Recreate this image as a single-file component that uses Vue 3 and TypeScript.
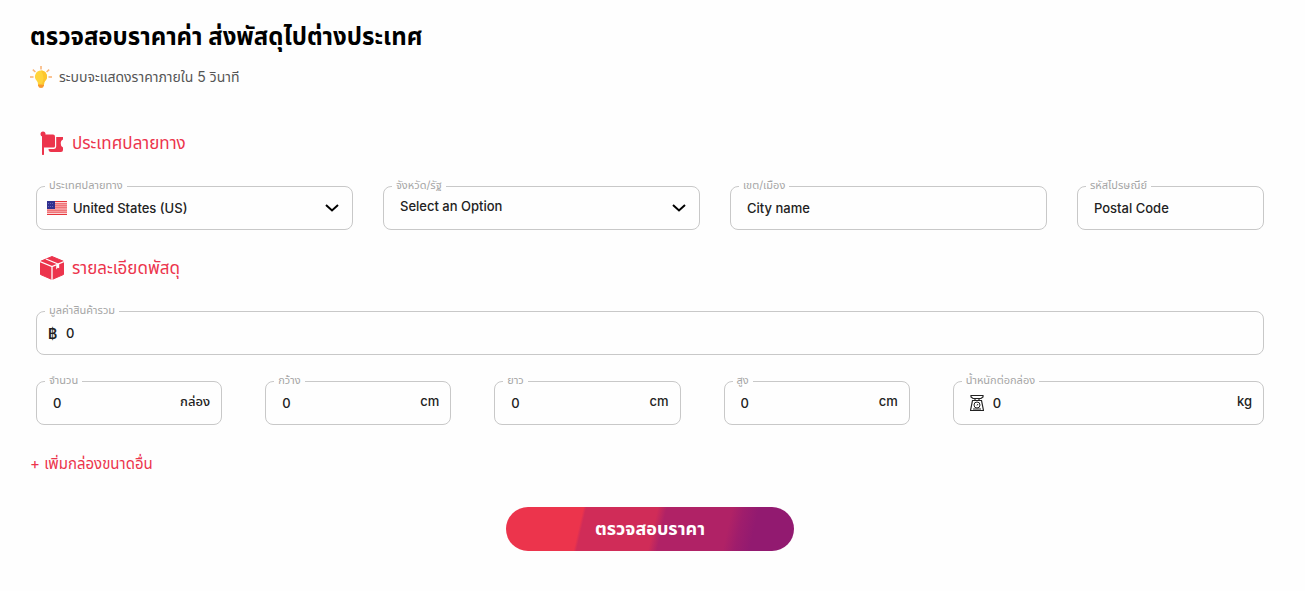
<script setup lang="ts">
import { ref } from 'vue'

interface SizeField {
  id: string
  label: string
  unit: string
}

const sizeFields: SizeField[] = [
  { id: 'quantity', label: 'จำนวน', unit: 'กล่อง' },
  { id: 'width', label: 'กว้าง', unit: 'cm' },
  { id: 'length', label: 'ยาว', unit: 'cm' },
  { id: 'height', label: 'สูง', unit: 'cm' },
]

const country = ref('US')
const province = ref('')
const city = ref('')
const postal = ref('')
const total = ref('0')
const weight = ref('0')
const sizes = ref<Record<string, string>>({ quantity: '0', width: '0', length: '0', height: '0' })
const rays = [0, 48, 90, 270, 312]
</script>

<template>
  <form class="quote" @submit.prevent>
    <h1>ตรวจสอบราคาค่า ส่งพัสดุไปต่างประเทศ</h1>
    <p class="hint">
      <svg width="22" height="22" viewBox="0 0 22 22" aria-hidden="true">
        <path
          v-for="angle in rays"
          :key="angle"
          d="M11 0v3.500"
          stroke="#f9b578"
          stroke-width="1.6"
          :transform="`rotate(${angle} 11 11)`"
        />
        <path d="M8 16h6v3.500q-.5 2.500-3 2.500t-3-2.500z" fill="#f79a2e" />
        <path d="M11 4.500a6 6 0 0 1 4.300 10.200Q14 16 14 18.500H8q0-2.500-1.300-3.800A6 6 0 0 1 11 4.500z" fill="#ffd43c" />
        <path d="M11 4.500a6 6 0 0 1 4.300 10.200Q14 16 14 18.500h-2.500q4-7-.5-14z" fill="#fdc62f" />
      </svg>
      <span>ระบบจะแสดงราคาภายใน 5 วินาที</span>
    </p>

    <section class="destination">
      <h2>
        <svg width="24" height="26" viewBox="0 0 24 26" fill="#ec344c" aria-hidden="true">
          <circle cx="3" cy="4" r="2.500" />
          <path d="M2 4h2v20.500q-1 1-2 0z" />
          <path d="M3.500 4.500H13q2 0 2 2v9.500q0 1.500-1.500 1.500h-10z" />
          <path d="M16.200 7H23v2.500q-2.600 1-2.200 4.500-.2 2 2.200 3.500V20q0 2-2 2H11q-2.500 0-2.500-3H14q2.200-.2 2.200-2.500z" />
        </svg>
        ประเทศปลายทาง
      </h2>
      <div class="row place-row">
        <div class="field">
          <label for="country">ประเทศปลายทาง</label>
          <svg class="flag" width="20" height="14" viewBox="0 0 20 14" aria-hidden="true">
            <path d="M0 0h20v14H0z" fill="#f79a9d" />
            <path d="M0 .5h20M0 13.500h20" stroke="#e5353c" />
            <path d="M0 2.500h20M0 4.500h20M0 6.500h20M0 9.500h20M0 11.500h20" stroke="#ee7478" />
            <path d="M0 1.500h20M0 12.500h20" stroke="#fbd5d5" />
            <path d="M0 0h8v8H0z" fill="#30308f" />
            <path d="M1 2.500h6M1 5.500h6" stroke="#6464b4" stroke-dasharray="1 1" />
          </svg>
          <select id="country" v-model="country">
            <option value="US">United States (US)</option>
          </select>
          <svg class="chevron" width="14" height="9" viewBox="0 0 14 9" aria-hidden="true">
            <path d="M1 1l6 5.500L13 1" />
          </svg>
        </div>
        <div class="field wide-pad raised">
          <label for="province">จังหวัด/รัฐ</label>
          <select id="province" v-model="province">
            <option value="">Select an Option</option>
          </select>
          <svg class="chevron" width="14" height="9" viewBox="0 0 14 9" aria-hidden="true">
            <path d="M1 1l6 5.500L13 1" />
          </svg>
        </div>
        <div class="field wide-pad">
          <label for="city">เขต/เมือง</label>
          <input id="city" v-model="city" type="text" placeholder="City name" />
        </div>
        <div class="field wide-pad">
          <label for="postal">รหัสไปรษณีย์</label>
          <input id="postal" v-model="postal" type="text" placeholder="Postal Code" />
        </div>
      </div>
    </section>

    <section class="parcel">
      <h2>
        <svg width="24" height="24" viewBox="0 0 24 24" aria-hidden="true">
          <path d="M12 .5l11.500 4.800v13.200L12 23.500.5 18.500V5.300z" fill="#ec344c" stroke="#ec344c" stroke-linejoin="round" />
          <path d="M0 5.500l12 5 12-5M12 10.500V24M6 3l12 5" fill="none" stroke="#fefefe" stroke-width="1.3" />
          <path d="M16.200 8.800l3-1.300v4.700l-1.500-.4-1.500 1.700z" fill="#fefefe" />
        </svg>
        รายละเอียดพัสดุ
      </h2>
      <div class="field">
        <label for="total">มูลค่าสินค้ารวม</label>
        <span class="currency">฿</span>
        <input id="total" v-model="total" type="text" inputmode="decimal" />
      </div>
      <div class="row size-row">
        <div v-for="item in sizeFields" :key="item.id" class="field wide-pad">
          <label :for="item.id">{{ item.label }}</label>
          <input :id="item.id" v-model="sizes[item.id]" type="text" inputmode="decimal" />
          <span class="unit">{{ item.unit }}</span>
        </div>
        <div class="field wide-pad">
          <label for="weight">น้ำหนักต่อกล่อง</label>
          <svg class="scale" width="14" height="16" viewBox="0 0 14 16" fill="none" stroke="#222" aria-hidden="true">
            <path d="M1 .5h12v1.500l-2 1.500H3L1 2zM5 3.500v2M9 3.500v2M2.500 5.500h9l2 10H.5z" stroke-width="1.2" />
            <circle cx="7" cy="10" r="3" />
            <path d="M7 10.500l1-1.500M3 14h8" />
          </svg>
          <input id="weight" v-model="weight" type="text" inputmode="decimal" />
          <span class="unit">kg</span>
        </div>
      </div>
    </section>

    <button type="button" class="add">+ เพิ่มกล่องขนาดอื่น</button>
    <button type="submit" class="submit">ตรวจสอบราคา</button>
  </form>
</template>

<style>
body {
  margin: 0;
  background: #fefefe;
}
</style>

<style scoped>
.quote {
  display: flex;
  flex-direction: column;
  box-sizing: border-box;
  padding: 20px 35px 40px 30px;
  color: #222;
  font-family: "Inter", "Noto Sans Thai", "Noto Sans", sans-serif;
}
h1,
h2,
p {
  margin: 0;
}
h1 {
  color: #000;
  font-size: 24px;
  font-weight: 700;
  line-height: 34px;
}
.hint {
  display: flex;
  align-items: center;
  gap: 7px;
  margin-top: 11px;
  color: #555;
  font-size: 14px;
  line-height: 24px;
}
section {
  padding: 0 6px;
}
.destination {
  margin-top: 40px;
}
.parcel {
  margin-top: 24px;
}
h2 {
  display: flex;
  align-items: center;
  gap: 8px;
  margin: 0 0 29px 4px;
  color: #ec344c;
  font-size: 17px;
  font-weight: 400;
  line-height: 28px;
}
.row {
  display: grid;
}
.place-row {
  grid-template-columns: 317fr 317fr 317fr 187fr;
  gap: 30px;
}
.size-row {
  grid-template-columns: 186fr 186fr 186fr 186fr 311fr;
  gap: 43px;
  margin-top: 26px;
}
.field {
  position: relative;
  display: flex;
  align-items: center;
  box-sizing: border-box;
  min-width: 0;
  height: 44px;
  padding: 0 11px 0 10px;
  border: 1px solid #c8c8c8;
  border-radius: 8px;
}
.field.wide-pad {
  padding-left: 16px;
}
.field label {
  position: absolute;
  top: -11px;
  left: 8px;
  padding: 0 4px;
  background: #fefefe;
  color: #a5a5a5;
  font-size: 11px;
  line-height: 18px;
  white-space: nowrap;
}
input,
select {
  flex: 1;
  width: 100%;
  min-width: 0;
  height: 40px;
  margin: 0;
  padding: 0;
  border: 0;
  outline: 0;
  background: transparent;
  color: #222;
  font: 500 13px/20px "Inter", "Noto Sans Thai", sans-serif;
  appearance: none;
}
input::placeholder {
  color: #222;
  opacity: 1;
}
.raised select {
  padding-bottom: 4px;
}
.flag {
  margin-right: 6px;
}
.chevron {
  flex: none;
  margin-right: 2px;
  pointer-events: none;
}
.chevron path {
  fill: none;
  stroke: #000;
  stroke-width: 2;
}
.currency {
  width: 19px;
  padding-left: 1px;
  box-sizing: border-box;
  font-size: 14px;
  font-weight: 600;
}
.unit {
  padding-bottom: 4px;
  font-size: 13px;
  font-weight: 500;
  line-height: 20px;
}
.scale {
  margin-right: 9px;
}
button {
  border: 0;
  font-family: inherit;
  cursor: pointer;
}
.add {
  align-self: flex-start;
  margin-top: 26px;
  padding: 0;
  background: none;
  color: #ec344c;
  font-size: 15px;
  line-height: 26px;
}
.submit {
  align-self: center;
  width: 288px;
  height: 44px;
  margin-top: 30px;
  border-radius: 22px;
  background: linear-gradient(
    103deg,
    #ec344c 26%,
    #d02c58 27%,
    #d02c58 51%,
    #b02266 54%,
    #b02266 76%,
    #9f1d6c 80%,
    #921a70 85%
  );
  color: #fff;
  font-size: 18px;
  font-weight: 700;
}
</style>
